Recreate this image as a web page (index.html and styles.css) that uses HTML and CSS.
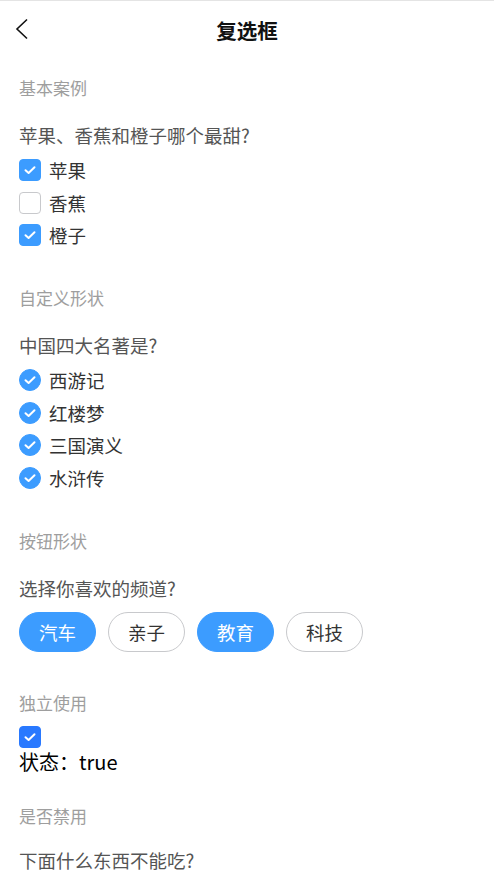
FILE: index.html
```html
<!DOCTYPE html>
<html lang="zh-CN">
<head>
  <meta charset="UTF-8">
  <meta name="viewport" content="width=device-width, initial-scale=1.0">
  <title>复选框</title>
  <link rel="stylesheet" href="styles.css">
</head>
<body>
    <header class="navbar">
        <a href="#" class="nav-back">
            <svg width="14" height="22" viewBox="0 0 14 22"><path d="M12 1.5 L2 11 L12 20.5" fill="none" stroke="#111" stroke-width="1.6"/></svg>
        </a>
        <h1 class="nav-title">复选框</h1>
    </header>

    <section class="demo demo-first">
        <div class="demo-title">基本案例</div>
        <div class="question">苹果、香蕉和橙子哪个最甜?</div>
        <ul class="options">
            <li class="option"><span class="box checked"><svg viewBox="0 0 22 22"><path d="M6.5 11.2 L9.6 14 L15.5 8.2"/></svg></span>苹果</li>
            <li class="option"><span class="box"></span>香蕉</li>
            <li class="option"><span class="box checked"><svg viewBox="0 0 22 22"><path d="M6.5 11.2 L9.6 14 L15.5 8.2"/></svg></span>橙子</li>
        </ul>
    </section>

    <section class="demo">
        <div class="demo-title">自定义形状</div>
        <div class="question">中国四大名著是?</div>
        <ul class="options">
            <li class="option"><span class="box circle checked"><svg viewBox="0 0 22 22"><path d="M6.5 11.2 L9.6 14 L15.5 8.2"/></svg></span>西游记</li>
            <li class="option"><span class="box circle checked"><svg viewBox="0 0 22 22"><path d="M6.5 11.2 L9.6 14 L15.5 8.2"/></svg></span>红楼梦</li>
            <li class="option"><span class="box circle checked"><svg viewBox="0 0 22 22"><path d="M6.5 11.2 L9.6 14 L15.5 8.2"/></svg></span>三国演义</li>
            <li class="option"><span class="box circle checked"><svg viewBox="0 0 22 22"><path d="M6.5 11.2 L9.6 14 L15.5 8.2"/></svg></span>水浒传</li>
        </ul>
    </section>

    <section class="demo">
        <div class="demo-title">按钮形状</div>
        <div class="question">选择你喜欢的频道?</div>
        <div class="pills">
            <span class="pill active">汽车</span>
            <span class="pill">亲子</span>
            <span class="pill active">教育</span>
            <span class="pill">科技</span>
        </div>
    </section>

    <section class="demo demo-single">
        <div class="demo-title">独立使用</div>
        <span class="box checked dark single"><svg viewBox="0 0 22 22"><path d="M6.5 11.2 L9.6 14 L15.5 8.2"/></svg></span>
        <div class="status">状态：true</div>
    </section>

    <section class="demo demo-disabled">
        <div class="demo-title">是否禁用</div>
        <div class="question">下面什么东西不能吃?</div>
    </section>
</body>
</html>
```

FILE: styles.css
```css
body {
    font-family: "Noto Sans CJK SC", "Noto Sans", sans-serif;
    margin: 0;
    padding: 0;
    background: #fff;
    color: #333;
}

.navbar {
    position: relative;
    height: 57px;
    border-top: 1px solid #e4e4e4;
    display: flex;
    align-items: center;
    justify-content: center;
}

.nav-back {
    position: absolute;
    left: 15px;
    top: 17px;
    width: 14px;
    height: 22px;
    display: flex;
}

.nav-title {
    margin: 0;
    font-size: 20.5px;
    font-weight: bold;
    color: #111;
    line-height: 26px;
}

.demo {
    padding: 0 19px;
    margin-top: 34.5px;
}

.demo-first {
    margin-top: 18px;
}

.demo-single {
    margin-top: 39px;
}

.demo-disabled {
    margin-top: 29px;
}

.demo-title {
    font-size: 17px;
    line-height: 24px;
    color: #9e9e9e;
}

.question {
    margin-top: 22px;
    font-size: 18.5px;
    line-height: 26px;
    color: #555;
}

.demo-disabled .question {
    margin-top: 19px;
}

.options {
    list-style: none;
    margin: 0;
    padding: 6px 0 0;
}

.option {
    height: 32.5px;
    display: flex;
    align-items: center;
    font-size: 18.5px;
    color: #333;
}

.box {
    width: 22px;
    height: 22px;
    box-sizing: border-box;
    border: 1px solid #c8c9cc;
    border-radius: 4px;
    background: #fff;
    margin-right: 8px;
    display: flex;
    flex-shrink: 0;
}

.box svg {
    width: 22px;
    height: 22px;
    margin: -1px;
}

.box path {
    fill: none;
    stroke: #fff;
    stroke-width: 2;
    stroke-linecap: round;
    stroke-linejoin: round;
}

.box.checked {
    background: #3c9cff;
    border-color: #3c9cff;
}

.box.circle {
    border-radius: 50%;
}

.box.dark {
    background: #2979ff;
    border-color: #2979ff;
}

.single {
    margin-top: 11px;
}

.status {
    margin-top: 1px;
    font-size: 20px;
    line-height: 26px;
    color: #000;
}

.pills {
    margin-top: 11.5px;
    display: flex;
    gap: 12px;
}

.pill {
    width: 77px;
    height: 40px;
    box-sizing: border-box;
    border: 1px solid #c8c9cc;
    border-radius: 20px;
    display: flex;
    align-items: center;
    justify-content: center;
    font-size: 18.5px;
    color: #333;
    background: #fff;
}

.pill.active {
    background: #3c9cff;
    border-color: #3c9cff;
    color: #fff;
}
```
